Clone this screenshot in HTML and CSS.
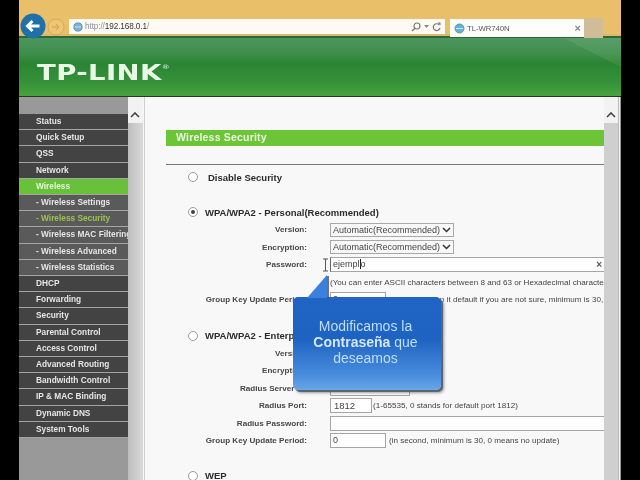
FILE: index.html
```html
<!DOCTYPE html>
<html lang="en">
<head>
<meta charset="utf-8">
<title>TL-WR740N</title>
<link rel="stylesheet" href="styles.css">
</head>
<body>
<div class="screen">
  <div class="toolbar">
    <svg class="nav-back" width="26" height="26" viewBox="0 0 26 26"><circle cx="13" cy="13" r="12.5" fill="#1f6fa8"/><path d="M19.5 13H8M12.500 8l-5 5 5 5" fill="none" stroke="#fff" stroke-width="3"/></svg>
    <svg class="nav-fwd" width="18" height="18" viewBox="0 0 18 18"><circle cx="9" cy="9" r="8" fill="#eec673" stroke="#d3a95a"/><path d="M5 9h7M9 6l3 3-3 3" fill="none" stroke="#cf9f50" stroke-width="1"/></svg>
    <div class="address">
      <svg class="favicon" width="10" height="10" viewBox="0 0 11 11"><circle cx="5.500" cy="5.500" r="4.500" fill="#7fb0d8" stroke="#4f86b5"/><path d="M2 5.500h7" stroke="#d8e8f3"/></svg>
      <span class="url"><span class="url-dim">http://</span>192.168.0.1<span class="url-dim">/</span></span>
      <span class="addr-tools">
        <svg width="10" height="10" viewBox="0 0 10 10"><circle cx="6" cy="4" r="3" fill="none" stroke="#777" stroke-width="1.200"/><path d="M4 6.200 1 9" stroke="#777" stroke-width="1.400"/></svg>
        <svg width="5" height="4" viewBox="0 0 5 4"><path d="M0 0h5L2.500 3z" fill="#888"/></svg>
        <svg width="9" height="10" viewBox="0 0 9 10"><path d="M7.500 3.200A3.400 3.400 0 1 0 8 6" fill="none" stroke="#777" stroke-width="1.200"/><path d="M5.500 .5h3v3z" fill="#777"/></svg>
      </span>
    </div>
    <div class="tab">
      <svg width="11" height="11" viewBox="0 0 11 11"><circle cx="5.500" cy="5.500" r="4.500" fill="#63b0dc" stroke="#5c9f7d"/><path d="M2 5.500h7" stroke="#d8e8f3"/></svg>
      <span class="tab-title">TL-WR740N</span>
      <span class="tab-close">×</span>
    </div>
    <div class="new-tab"></div>
  </div>
  <header class="banner">
    <div class="logo">TP-LINK<sup class="logo-mark">®</sup></div>
  </header>
  <div class="frames">
    <nav class="menu-frame">
      <div class="menu">
        <div class="item">Status</div>
        <div class="item">Quick Setup</div>
        <div class="item">QSS</div>
        <div class="item">Network</div>
        <div class="item active">Wireless</div>
        <div class="item sub">- Wireless Settings</div>
        <div class="item sub current">- Wireless Security</div>
        <div class="item sub">- Wireless MAC Filtering</div>
        <div class="item sub">- Wireless Advanced</div>
        <div class="item sub">- Wireless Statistics</div>
        <div class="item">DHCP</div>
        <div class="item">Forwarding</div>
        <div class="item">Security</div>
        <div class="item">Parental Control</div>
        <div class="item">Access Control</div>
        <div class="item">Advanced Routing</div>
        <div class="item">Bandwidth Control</div>
        <div class="item">IP &amp; MAC Binding</div>
        <div class="item">Dynamic DNS</div>
        <div class="item">System Tools</div>
      </div>
      <div class="scrollbar menu-scroll"><svg class="chev" width="10" height="6" viewBox="0 0 10 6"><path d="M1 5l4-4 4 4" fill="none" stroke="#444" stroke-width="1.600"/></svg></div>
    </nav>
    <main class="content">
      <h1 class="title">Wireless Security</h1>
      <hr class="rule">
      <label class="option disable"><span class="radio"></span>Disable Security</label>
      <label class="option wpa"><span class="radio on"></span>WPA/WPA2 - Personal(Recommended)</label>
      <div class="form">
        <div class="lbl">Version:</div><div class="ctl"><span class="select">Automatic(Recommended)<svg width="9" height="6" viewBox="0 0 9 6"><path d="M1 1l3.500 3.500L8 1" fill="none" stroke="#333" stroke-width="1.500"/></svg></span></div>
        <div class="lbl">Encryption:</div><div class="ctl"><span class="select">Automatic(Recommended)<svg width="9" height="6" viewBox="0 0 9 6"><path d="M1 1l3.500 3.500L8 1" fill="none" stroke="#333" stroke-width="1.500"/></svg></span></div>
        <div class="lbl">Password:</div><div class="ctl"><span class="input wide active-input"><span>ejempl<span class="caret"></span>o</span><span class="clear">×</span></span></div>
        <div class="lbl"></div><div class="ctl note">(You can enter ASCII characters between 8 and 63 or Hexadecimal characters between 8 and 64.)</div>
        <div class="lbl">Group Key Update Period:</div><div class="ctl"><span class="input short">0</span><span class="note after">Seconds (Keep it default if you are not sure, minimum is 30, 0 means no update)</span></div>
      </div>
      <label class="option ent"><span class="radio"></span>WPA/WPA2 - Enterprise</label>
      <div class="form">
        <div class="lbl">Version:</div><div class="ctl"><span class="select narrow"></span></div>
        <div class="lbl">Encryption:</div><div class="ctl"><span class="select narrow"></span></div>
        <div class="lbl">Radius Server IP:</div><div class="ctl"><span class="input server"></span></div>
        <div class="lbl">Radius Port:</div><div class="ctl"><span class="input port">1812</span><span class="note after-port">(1-65535, 0 stands for default port 1812)</span></div>
        <div class="lbl">Radius Password:</div><div class="ctl"><span class="input wide"></span></div>
        <div class="lbl">Group Key Update Period:</div><div class="ctl"><span class="input short">0</span><span class="note after">(in second, minimum is 30, 0 means no update)</span></div>
      </div>
      <label class="option wep"><span class="radio"></span>WEP</label>
    </main>
    <div class="scrollbar content-scroll"><svg class="chev" width="10" height="6" viewBox="0 0 10 6"><path d="M1 5l4-4 4 4" fill="none" stroke="#444" stroke-width="1.600"/></svg></div>
    <div class="frame-edge"></div>
    <svg class="cursor" width="7" height="14" viewBox="0 0 7 14"><path d="M1 1h5M1 13h5M3.500 1v12" stroke="#555" fill="none"/></svg>
    <div class="callout">
      <svg class="tail" width="22" height="23" viewBox="0 0 22 23"><path d="M20 0V23H0z" fill="#3a80dc"/><path d="M21 1V23" stroke="#444" stroke-width="1.500"/></svg>
      <p class="callout-text">Modificamos la <b>Contraseña</b> que deseamos</p>
    </div>
  </div>
</div>
</body>
</html>
```
FILE: styles.css
```css
* { box-sizing: border-box; }
html, body { margin: 0; height: 100%; background: #000; overflow: hidden; }
body { font-family: "Liberation Sans", Arial, sans-serif; }
.screen {
  width: 602px;
  height: 480px;
  margin-left: 19px;
  overflow: hidden;
  display: flex;
  flex-direction: column;
  filter: blur(0.35px);
}

/* browser toolbar */
.toolbar {
  height: 38px;
  flex: none;
  background: linear-gradient(#e9c069 0 34px, #dcb871 34px);
  display: flex;
  align-items: flex-start;
  position: relative;
  z-index: 1;
  border-bottom: 2px solid #2c6a33;
}
.nav-back { flex: none; margin: 13px 0 0 1px; }
.nav-fwd { flex: none; margin: 18px 0 0 1px; }
.address {
  flex: none;
  width: 376px;
  height: 15px;
  margin: 19px 0 0 4px;
  background: #fdfaf3;
  display: flex;
  align-items: center;
  padding: 0 4px;
  gap: 2px;
}
.favicon { flex: none; }
.url { font-size: 8.200px; color: #333; letter-spacing: -0.1px; }
.url-dim { color: #8a8f96; }
.addr-tools { margin-left: auto; display: flex; align-items: center; gap: 3px; }
.tab {
  flex: none;
  width: 134px;
  height: 18px;
  margin: 19px 0 0 5px;
  background: #fdfdfb;
  display: flex;
  align-items: center;
  padding: 0 3px 0 4px;
  gap: 2px;
}
.tab-title { font-size: 7.800px; color: #555; letter-spacing: -0.1px; }
.tab-close { margin-left: auto; font-size: 11px; color: #888; font-weight: bold; }
.new-tab { flex: none; width: 19px; height: 20px; margin-top: 18px; background: #cfbd97; }

/* green banner */
.banner {
  height: 59px;
  flex: none;
  background:
    linear-gradient(27deg, transparent 0 92%, rgba(255, 255, 255, .07) 92%),
    linear-gradient(#4d9560 0, #3f8f4b 15px, #2a8433 25px, #37923a 45px, #45a23c 57px);
  border-bottom: 1px solid #26342a;
  padding: 25px 0 0 18px;
}
.logo {
  font-family: "DejaVu Sans", sans-serif;
  font-size: 21px;
  font-weight: bold;
  color: #e9f8e6;
  letter-spacing: 0.3px;
  line-height: 21px;
  transform: scaleX(1.31);
  transform-origin: left center;
}
.logo-mark { font-size: 6px; vertical-align: 11px; line-height: 0; font-weight: normal; }

/* frames */
.frames { flex: 1; display: flex; position: relative; min-height: 0; background: #f7f7f8; }
.menu-frame { flex: none; width: 124px; display: flex; background: #999; }
.menu { flex: none; width: 109px; padding-top: 17px; background: #999; }
.item {
  height: 16.210px;
  line-height: 14.500px;
  background: #434343;
  border-bottom: 1.500px solid #a4a4a4;
  color: #e6e6e6;
  font-size: 8.300px;
  font-weight: bold;
  padding-left: 17px;
  white-space: nowrap;
  overflow: hidden;
}
.item.sub { background: #5a5a5a; }
.item.active { background: #69c13a; color: #e5f5d8; }
.item.current { color: #9dc34f; }
.scrollbar { flex: none; position: relative; background: #cfcfcf; }
.menu-scroll { width: 15px; background: linear-gradient(90deg, #bdbdbd, #dadada); }
.content-scroll { width: 14px; }
.menu-scroll::before, .content-scroll::before {
  content: "";
  position: absolute;
  left: 0; right: 0; top: 0; height: 26px;
  background: #f2f2f2;
}
.chev { position: absolute; left: 2px; top: 15px; z-index: 1; }

.content {
  flex: none;
  width: 460px;
  margin-left: 1px;
  padding: 0 0 0 21px;
  background: #f8f8f9;
  border-left: 1px solid #cfcfcf;
  overflow: hidden;
  color: #333;
}
.title {
  margin: 33px 0 0 0;
  height: 16px;
  background: #6cc437;
  color: #eef8e6;
  font-size: 10.500px;
  font-weight: bold;
  line-height: 15px;
  padding-left: 10px;
  letter-spacing: 0.2px;
}
.rule { margin: 18px 0 0; border: 0; border-top: 1px solid #777; height: 0; }
.option {
  display: flex;
  align-items: center;
  font-size: 9.500px;
  font-weight: bold;
  color: #2b2b2b;
  height: 14px;
  white-space: nowrap;
}
.radio {
  flex: none;
  width: 10px;
  height: 10px;
  border-radius: 50%;
  border: 1px solid #9a9a9a;
  background: #fff;
  margin-left: 22px;
  position: relative;
}
.radio.on::after {
  content: "";
  position: absolute;
  inset: 2px;
  border-radius: 50%;
  background: #444;
}
.disable { margin-top: 5px; gap: 10px; }
.wpa { margin-top: 21px; gap: 7px; }
.ent { margin-top: 20px; gap: 7px; }
.wep { margin-top: 19px; gap: 7px; }
.form {
  display: grid;
  grid-template-columns: 141px 1fr;
  grid-auto-rows: 17.500px;
  column-gap: 23px;
  margin-top: 2px;
}
.lbl {
  text-align: right;
  font-size: 8.100px;
  font-weight: bold;
  color: #484848;
  line-height: 17.500px;
  white-space: nowrap;
}
.ctl { display: flex; align-items: center; white-space: nowrap; min-width: 0; overflow: hidden; }
.select {
  width: 124px;
  height: 14px;
  display: flex;
  align-items: center;
  justify-content: space-between;
  border: 1px solid #a8a8a8;
  background: #f8f8f8;
  font-size: 9px;
  color: #444;
  padding: 0 2px;
}
.select.narrow { width: 80px; }
.input {
  flex: none;
  height: 15px;
  background: #fff;
  border: 1px solid #a5a5a5;
  font-size: 9px;
  color: #444;
  line-height: 13px;
  padding-left: 2px;
  display: block;
}
.wide { width: 276px; }
.short { width: 56px; }
.server { width: 80px; }
.port { width: 42px; padding-left: 3px; font-size: 9.500px; }
.active-input { display: flex; align-items: center; justify-content: space-between; padding-right: 4px; border-left-color: #666; border-right: 0; }
.caret { display: inline-block; width: 0; height: 10px; border-left: 1px solid #222; vertical-align: -2px; }
.clear { font-size: 10px; font-weight: bold; color: #555; }
.note { font-size: 8.100px; color: #444; }
.after { margin-left: 3px; }
.after-port { margin-left: 1px; }

.frame-edge { flex: none; width: 3px; background: #f4f4f4; border-left: 1px solid #bbb; border-right: 1px solid #999; }

/* overlays */
.cursor { position: absolute; left: 303px; top: 161px; }
.callout {
  position: absolute;
  left: 274px;
  top: 200px;
  width: 148px;
  height: 93px;
  border-radius: 5px;
  background: linear-gradient(#2064c4 0, #1f63c2 45%, #4a8ede 85%, #6aa6e6 100%);
  box-shadow: 2px 2px 0 #5a6672, 3px 3px 3px rgba(60, 60, 60, .5);
  display: flex;
  align-items: center;
  justify-content: center;
  padding: 0 13px 4px 10px;
}
.tail { position: absolute; left: 14px; top: -22px; }
.callout-text {
  margin: 0;
  text-align: center;
  font-size: 14px;
  line-height: 16px;
  color: #bfdefb;
}
.callout-text b { color: #d3e8fb; }
```
